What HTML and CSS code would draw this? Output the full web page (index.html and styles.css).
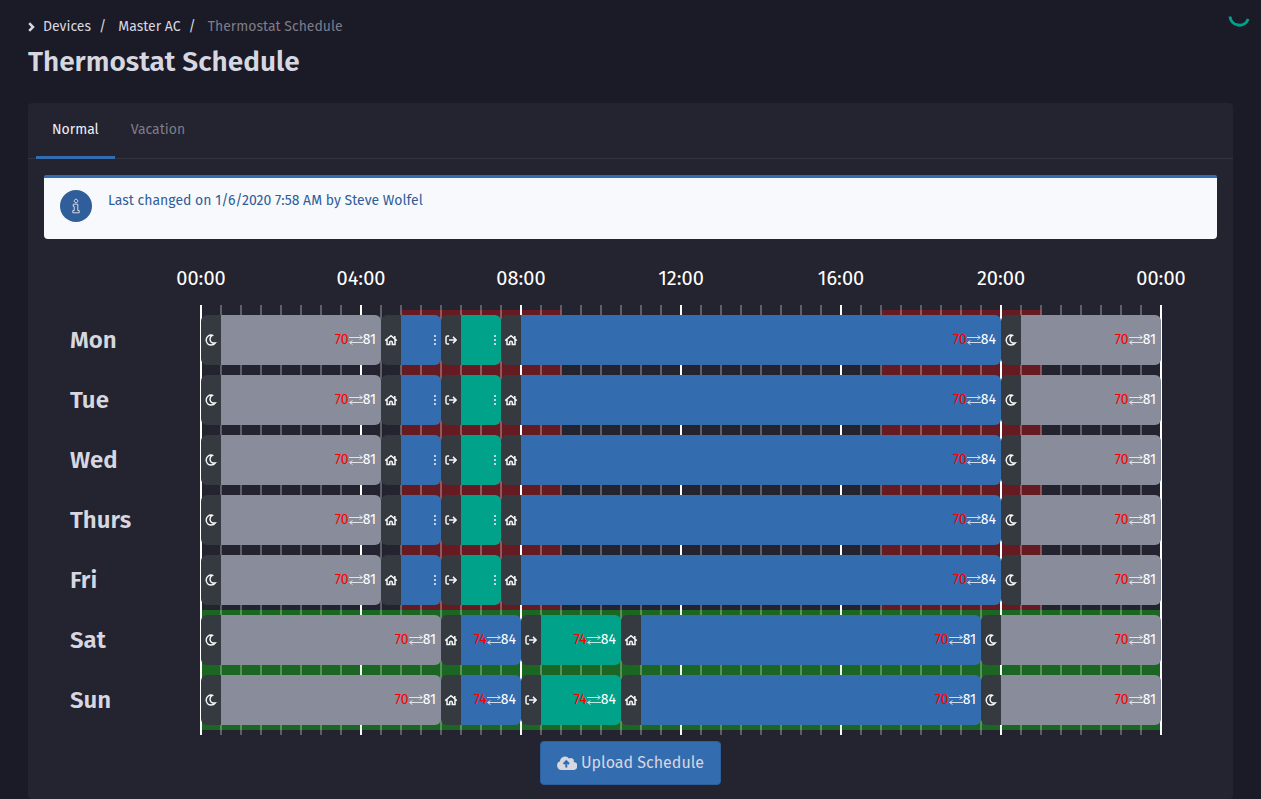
FILE: index.html
```html
<!DOCTYPE html>
<html lang="en">
<head>
<meta charset="utf-8">
<meta name="viewport" content="width=device-width, initial-scale=1">
<title>Thermostat Schedule</title>
<link rel="stylesheet" href="styles.css">
</head>
<body>
<svg class="sprite" aria-hidden="true">
  <symbol id="icon-moon" viewBox="0 0 12 12"><path d="M6.600 1.100C4 .8 1.200 2.900 1.200 6s2.400 5 5 5c1.700 0 3.100-.7 4-2-3 .6-5.200-1.200-5.200-3.800 0-1.700.8-3 2.300-3.800z"/></symbol>
  <symbol id="icon-home" viewBox="0 0 14 12"><path d="M1.200 6.600 7 1.700l5.800 4.900M3 5.600v5h2.700V8.200q0-1 1.300-1t1.300 1v2.400H11v-5M10.800 2v2.500"/></symbol>
  <symbol id="icon-leave" viewBox="0 0 12 12"><path d="M4.200 2.100H2.500Q1 2.100 1 3.600v4.800q0 1.500 1.500 1.500h1.700M4 6h7M8 2.900 11.100 6 8 9.100"/></symbol>
  <symbol id="icon-swap" viewBox="0 0 14 12"><path d="M0 3.500h13M10.500 1.500l3 2-3 2M14 8.500H1M3.500 6.500l-3 2 3 2"/></symbol>
</svg>
<svg class="spinner" viewBox="0 0 24 24" role="img" aria-label="Loading"><path d="M3 10.500a9.400 9.400 0 0 0 18.200 2.500"/></svg>
<main class="page">
  <header class="page-header">
    <nav aria-label="Breadcrumb">
      <ol class="breadcrumb">
        <li><a href="#devices"><svg class="chevron" viewBox="0 0 7 10" aria-hidden="true"><path d="M1.200 1.200 5 5 1.200 8.800"/></svg>Devices</a></li>
        <li><a href="#master-ac">Master AC</a></li>
        <li class="current" aria-current="page">Thermostat Schedule</li>
      </ol>
    </nav>
    <h1>Thermostat Schedule</h1>
  </header>
  <section class="card">
    <div class="tabs" role="tablist">
      <button class="tab active" type="button" role="tab" aria-selected="true">Normal</button>
      <button class="tab" type="button" role="tab" aria-selected="false">Vacation</button>
    </div>
    <div class="card-body">
      <div class="alert">
        <span class="alert-icon"><svg viewBox="0 0 10 16" aria-hidden="true"><path d="M5 1.200a1.800 1.800 0 1 0 .01 0zM2.200 6.200h4.600v6.300h1.400v2.300H1.800v-2.300h1.400V8.400h-1z"/></svg></span>
        <p>Last changed on 1/6/2020 7:58 AM by Steve Wolfel</p>
      </div>
      <div class="schedule">
        <div class="hours">
          <span>00:00</span><span>04:00</span><span>08:00</span><span>12:00</span><span>16:00</span><span>20:00</span><span>00:00</span>
        </div>
        <div class="day-names" id="day-names"></div>
        <div class="timeline">
          <div class="bands">
            <div class="band peak morning"></div>
            <div class="band peak evening"></div>
            <div class="band weekend"></div>
          </div>
          <div class="ticks"></div>
          <div class="days" id="days"></div>
        </div>
      </div>
      <button class="upload" type="button"><svg viewBox="0 0 20 14" aria-hidden="true"><path class="cloud" d="M4.500 14A4.500 4.500 0 0 1 3 5.300 5 5 0 0 1 12 2.600a3 3 0 0 1 4.700 3.300A4 4 0 0 1 16 14z"/><path class="arrow" d="M9.300 11.500V5.500M6.500 8l2.800-2.800L12.100 8"/></svg>Upload Schedule</button>
    </div>
  </section>
</main>
<script src="schedule.js"></script>
</body>
</html>
```

FILE: styles.css
```css
*, *::before, *::after { box-sizing: border-box; }

body {
  margin: 0;
  background: #1b1a27;
  color: #d7d7e0;
  font: 15px/20px "Fira Sans", "Noto Sans", sans-serif;
}

button { font: inherit; cursor: pointer; }
a { color: inherit; text-decoration: none; }
svg { fill: none; stroke: currentColor; }
.sprite { display: none; }

.spinner {
  position: fixed;
  top: 6px;
  right: 10px;
  width: 24px;
  height: 24px;
  color: #00a28a;
  stroke-width: 3;
}

.page {
  display: flex;
  flex-direction: column;
  min-height: 100vh;
  padding: 16px 28px 1px;
}

.page-header { padding-bottom: 23px; }

.breadcrumb {
  display: flex;
  margin: 0;
  padding: 0;
  list-style: none;
  font-size: 14px;
  line-height: 21px;
}
.breadcrumb a { display: inline-flex; align-items: center; }
.breadcrumb li + li::before { content: "/"; padding: 0 12px 0 8px; color: #d7d7e0; }
.breadcrumb .current { color: #7e7d88; }
.chevron { width: 7px; height: 10px; margin-right: 8px; stroke-width: 2.500; }

h1 {
  margin: 6px 0 0;
  font-size: 28px;
  line-height: 36px;
  font-weight: 600;
}

.card {
  flex: 1;
  background: #242330;
  border-radius: 4px;
}

.tabs {
  display: flex;
  padding: 0 8px;
  box-shadow: inset 0 -1px #34333f;
}
.tab {
  height: 56px;
  padding: 2px 16px 0;
  border: 0;
  border-bottom: 3px solid transparent;
  background: none;
  color: #7e7d88;
  font-size: 14px;
}
.tab.active { border-color: #346cb0; color: #f0f0f5; }

.card-body {
  display: flex;
  flex-direction: column;
  align-items: center;
  padding: 16px 16px 14px;
}

.alert {
  display: flex;
  align-items: flex-start;
  gap: 16px;
  align-self: stretch;
  height: 64px;
  padding: 12px 16px;
  border-top: 3px solid #346cb0;
  border-radius: 2px 2px 4px 4px;
  background: #f8f9fd;
  color: #2f5e9a;
  font-size: 14px;
  line-height: 22px;
}
.alert p { margin: 0; }
.alert-icon {
  display: flex;
  align-items: center;
  justify-content: center;
  width: 32px;
  height: 32px;
  border-radius: 50%;
  background: #2f5e9a;
  color: #d7d7e0;
}
.alert-icon svg { width: 10px; height: 16px; }

.schedule {
  display: grid;
  grid-template-columns: 130px 1fr;
  align-self: stretch;
  padding: 24px 55px 0 26px;
  color: #fff;
}

.hours {
  grid-column: 2;
  display: flex;
  justify-content: space-between;
  margin: 0 1px;
  height: 42px;
  font-size: 20px;
  line-height: 30px;
}
.hours span { display: flex; justify-content: center; width: 0; }

.day-names { padding: 5px 0; color: #d7d7e0; font-size: 24px; font-weight: 600; }
.day-names div { height: 60px; line-height: 60px; }

.timeline { display: grid; }
.timeline > * { grid-area: 1 / 1; }

.bands {
  display: grid;
  grid-template-columns: repeat(48, 1fr);
  grid-template-rows: repeat(7, 60px);
  padding: 5px 1px;
}
.peak { background: #661a22; }
.morning { grid-area: 1 / 11 / 6 / 19; }
.evening { grid-area: 1 / 35 / 6 / 43; }
.weekend { grid-area: 6 / 1 / 8 / 49; background: #1a6622; }

.ticks {
  background:
    repeating-linear-gradient(to right, #fff 0 2px, transparent 2px calc((100% - 2px) / 6)),
    repeating-linear-gradient(to right, rgba(255, 255, 255, 0.27) 0 2px, transparent 2px calc((100% - 2px) / 48));
}

.days { padding: 5px 1px; }
.day {
  display: grid;
  grid-template-columns: repeat(48, 1fr);
  height: 60px;
  padding: 5px 0;
}

.block {
  display: grid;
  grid-template-columns: 20px 1fr;
  overflow: hidden;
  border-radius: 6px;
  font-size: 14px;
}
.block-handle {
  display: flex;
  align-items: center;
  justify-content: center;
  background: #343a40;
  color: #f4f4f4;
}
.block-handle svg { width: 12px; height: 12px; stroke-width: 1.500; }
.block-handle .home { width: 14px; }
.block-range {
  display: flex;
  align-items: center;
  justify-content: flex-end;
  padding-right: 5px;
}
.sleep .block-range { background: #888c9b; }
.home .block-range { background: #346cb0; }
.away .block-range { background: #00a28a; }
.block-range svg { width: 14px; height: 12px; opacity: 0.75; }
.low { color: #f00; }
.more { display: grid; gap: 2px; padding: 0; border: 0; background: none; }
.more i { width: 2px; height: 2px; background: #c3d3e6; }

.upload {
  display: flex;
  align-items: center;
  gap: 4px;
  height: 44px;
  margin-top: 6px;
  padding: 1px 16px 0;
  border: 1px solid #2c5f9e;
  border-radius: 4px;
  background: #346cb0;
  color: #d7d7e0;
  font-size: 16px;
}
.upload svg { width: 20px; height: 14px; }
.cloud { fill: currentColor; stroke: none; }
.arrow { stroke: #346cb0; stroke-width: 2; }
```

FILE: schedule.js
```js
// Block: [mode, start, end, low, high]; times are in half hours from midnight.
const weekday = [
  ["sleep", 0, 9, 70, 81],
  ["home", 9, 12],
  ["away", 12, 15],
  ["home", 15, 40, 70, 84],
  ["sleep", 40, 48, 70, 81],
];
const weekend = [
  ["sleep", 0, 12, 70, 81],
  ["home", 12, 16, 74, 84],
  ["away", 16, 21, 74, 84],
  ["home", 21, 39, 70, 81],
  ["sleep", 39, 48, 70, 81],
];
const week = [
  ["Mon", weekday], ["Tue", weekday], ["Wed", weekday], ["Thurs", weekday],
  ["Fri", weekday], ["Sat", weekend], ["Sun", weekend],
];
const icons = { sleep: "moon", home: "home", away: "leave" };

function renderBlock([mode, start, end, low, high]) {
  const range = low
    ? `<span class="low">${low}</span><svg aria-hidden="true"><use href="#icon-swap"/></svg><span>${high}</span>`
    : `<button class="more" type="button" aria-label="Show range"><i></i><i></i><i></i></button>`;
  return `<div class="block ${mode}" style="grid-column: ${start + 1} / ${end + 1}">
    <div class="block-handle"><svg class="${icons[mode]}" aria-hidden="true"><use href="#icon-${icons[mode]}"/></svg></div>
    <div class="block-range">${range}</div>
  </div>`;
}

document.getElementById("day-names").innerHTML =
  week.map(([name]) => `<div>${name}</div>`).join("");
document.getElementById("days").innerHTML =
  week.map(([, blocks]) => `<div class="day">${blocks.map(renderBlock).join("")}</div>`).join("");
```
